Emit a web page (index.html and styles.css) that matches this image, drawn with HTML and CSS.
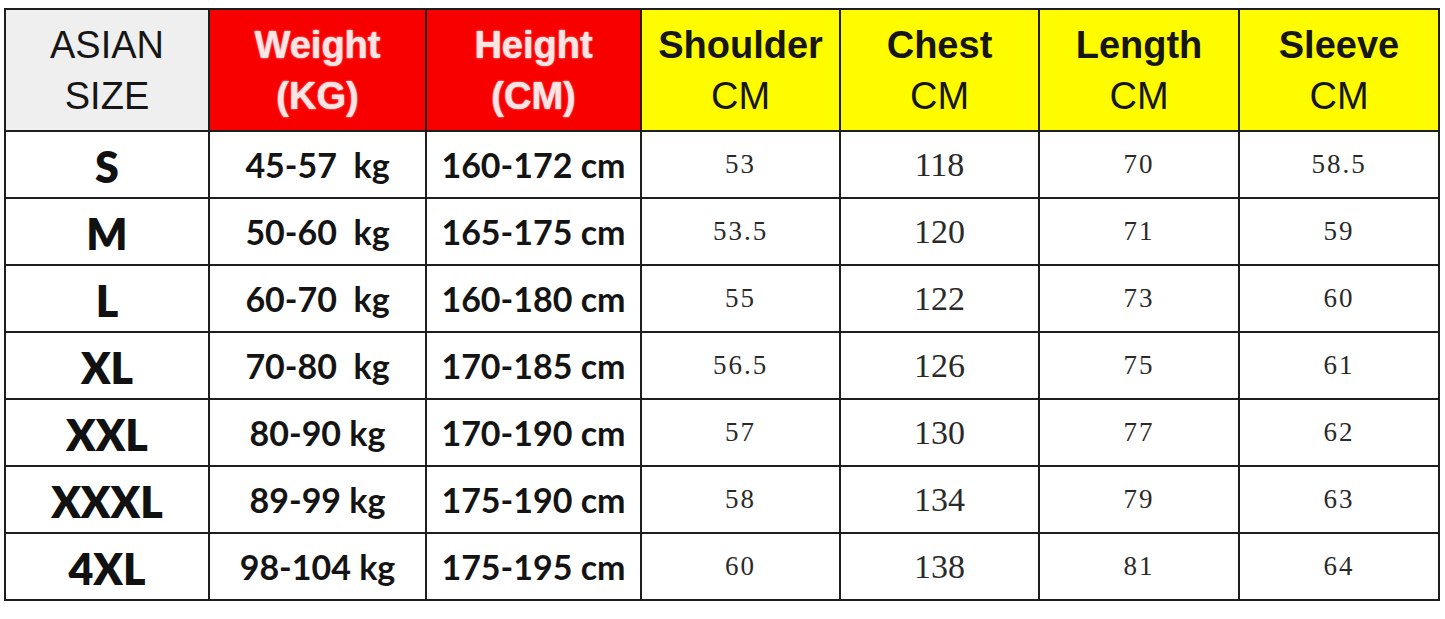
FILE: index.html
```html
<!DOCTYPE html>
<html>
<head>
<meta charset="utf-8">
<link rel="stylesheet" href="styles.css">
</head>
<body>
<div class="page">
<table class="chart">
  <colgroup>
    <col class="c1"><col class="c2"><col class="c3"><col class="c4"><col class="c5"><col class="c6"><col class="c7">
  </colgroup>
  <thead>
    <tr>
      <th class="h-grey">ASIAN<br>SIZE</th>
      <th class="h-red">Weight<br>(KG)</th>
      <th class="h-red">Height<br>(CM)</th>
      <th class="h-yellow"><b>Shoulder</b><br>CM</th>
      <th class="h-yellow"><b>Chest</b><br>CM</th>
      <th class="h-yellow"><b>Length</b><br>CM</th>
      <th class="h-yellow"><b>Sleeve</b><br>CM</th>
    </tr>
  </thead>
  <tbody>
    <tr><td class="size">S</td><td class="wh">45-57&nbsp; kg</td><td class="wh">160-172 cm</td><td class="num">53</td><td class="num big">118</td><td class="num">70</td><td class="num">58.5</td></tr>
    <tr><td class="size">M</td><td class="wh">50-60&nbsp; kg</td><td class="wh">165-175 cm</td><td class="num">53.5</td><td class="num big">120</td><td class="num">71</td><td class="num">59</td></tr>
    <tr><td class="size">L</td><td class="wh">60-70&nbsp; kg</td><td class="wh">160-180 cm</td><td class="num">55</td><td class="num big">122</td><td class="num">73</td><td class="num">60</td></tr>
    <tr><td class="size">XL</td><td class="wh">70-80&nbsp; kg</td><td class="wh">170-185 cm</td><td class="num">56.5</td><td class="num big">126</td><td class="num">75</td><td class="num">61</td></tr>
    <tr><td class="size">XXL</td><td class="wh">80-90 kg</td><td class="wh">170-190 cm</td><td class="num">57</td><td class="num big">130</td><td class="num">77</td><td class="num">62</td></tr>
    <tr><td class="size">XXXL</td><td class="wh">89-99 kg</td><td class="wh">175-190 cm</td><td class="num">58</td><td class="num big">134</td><td class="num">79</td><td class="num">63</td></tr>
    <tr><td class="size">4XL</td><td class="wh">98-104 kg</td><td class="wh">175-195 cm</td><td class="num">60</td><td class="num big">138</td><td class="num">81</td><td class="num">64</td></tr>
  </tbody>
</table>
</div>
</body>
</html>
```
FILE: styles.css
```css
html, body {
  margin: 0;
  padding: 0;
  background: #ffffff;
}
.page {
  padding: 8px 0 0 4px;
}
.chart {
  border-collapse: collapse;
  table-layout: fixed;
  width: 1434px;
  border: 2px solid #1e1e1e;
}
.c1 { width: 204px; }
.c2 { width: 217px; }
.c3 { width: 215px; }
.c4 { width: 199px; }
.c5 { width: 199px; }
.c6 { width: 200px; }
.c7 { width: 200px; }

.chart th, .chart td {
  border: 2px solid #1e1e1e;
  text-align: center;
  vertical-align: middle;
  padding: 0;
}
.chart thead tr { height: 122px; }
.chart tbody tr { height: 67px; }

.chart th {
  font-family: "Liberation Sans", Arial, sans-serif;
  font-size: 38px;
  line-height: 51px;
  font-weight: normal;
  color: #161616;
  padding-top: 2px;
}
.h-grey {
  background: #efefef;
}
.h-red {
  background: #f80000;
  color: #ffe4e4 !important;
  font-weight: bold !important;
  text-shadow: 0 0 2px #ff9a9a, 0 0 1px #ffffff;
}
.h-yellow {
  background: #fffc00;
}
.h-yellow b {
  font-weight: bold;
}

.size {
  font-family: Lato, "Open Sans", sans-serif;
  font-weight: 800;
  font-size: 43px;
  color: #111;
  padding-top: 3px !important;
}
.wh {
  font-family: Lato, "Open Sans", sans-serif;
  font-weight: bold;
  font-size: 34px;
  color: #141414;
}
.num {
  font-family: "Liberation Serif", "DejaVu Serif", serif;
  font-size: 27px;
  letter-spacing: 2px;
  color: #2a2a2a;
}
.num.big {
  font-size: 34px;
  letter-spacing: 0;
}
```
